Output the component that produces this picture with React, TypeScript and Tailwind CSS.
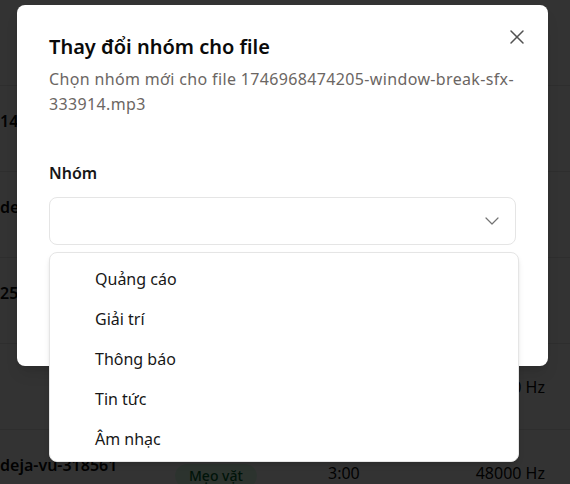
import React from "react";

const rows = [
  { name: "", group: "", duration: "", rate: "" },
  { name: "14", group: "", duration: "", rate: "" },
  { name: "deja-vu-318561", group: "", duration: "", rate: "" },
  { name: "2558-click-sfx", group: "", duration: "", rate: "" },
  { name: "", group: "", duration: "", rate: "48000 Hz" },
  { name: "deja-vu-318561", group: "Mẹo vặt", duration: "3:00", rate: "48000 Hz" },
];

const groups = ["Quảng cáo", "Giải trí", "Thông báo", "Tin tức", "Âm nhạc"];

const App = () => {
  return (
    <div className="relative w-[570px] h-[484px] overflow-hidden bg-white text-neutral-950 font-['Noto_Sans',sans-serif]">
      {/* table behind the dialog */}
      <div className="flex flex-col">
        {rows.map((r, i) => (
          <div key={i} className="flex h-[86px] shrink-0 border-b border-neutral-200 items-center">
            <div className="w-[175px] pb-4 font-semibold text-base whitespace-nowrap">{r.name}</div>
            <div className="w-[153px] pt-[5px]">
              {r.group && (
                <span className="inline-flex h-6 items-center rounded-full bg-green-100 px-[14px] text-sm font-medium text-green-800">
                  {r.group}
                </span>
              )}
            </div>
            <div className="w-[100px] text-base">{r.duration}</div>
            <div className="flex-1 pr-[25px] text-right text-base">{r.rate}</div>
          </div>
        ))}
      </div>

      {/* overlay */}
      <div className="absolute inset-0 bg-black/80" />

      {/* dialog */}
      <div className="absolute left-[17px] top-[5px] w-[531px] h-[361px] rounded-lg bg-white shadow-lg px-8 pt-7">
        <button className="absolute right-[19px] top-5 text-neutral-600">
          <svg width="24" height="24" viewBox="0 0 24 24" fill="none" stroke="currentColor" strokeWidth="1.5" strokeLinecap="round">
            <path d="M18 6 6 18" />
            <path d="m6 6 12 12" />
          </svg>
        </button>
        <h2 className="text-xl leading-7 font-semibold text-neutral-950">Thay đổi nhóm cho file</h2>
        <p className="mt-1.5 text-base leading-[25px] tracking-[0.35px] text-[#6b6663]">
          Chọn nhóm mới cho file 1746968474205-window-break-sfx-333914.mp3
        </p>
        <div className="mt-11 text-base leading-6 font-semibold text-neutral-900">Nhóm</div>
        <div className="mt-3 flex h-12 items-center justify-end rounded-lg border border-neutral-200 pr-[11px]">
          <svg width="24" height="24" viewBox="0 0 24 24" fill="none" stroke="currentColor" strokeWidth="1.2" strokeLinecap="round" strokeLinejoin="round" className="text-neutral-500">
            <path d="m6 9 6 6 6-6" />
          </svg>
        </div>
      </div>

      {/* select dropdown */}
      <div className="absolute left-[49px] top-[252px] w-[470px] h-[210px] rounded-lg border border-neutral-200 bg-white p-1 shadow-md">
        {groups.map((g) => (
          <div key={g} className="flex h-10 items-center pl-[41px] pt-1 text-base text-neutral-900">
            {g}
          </div>
        ))}
      </div>
    </div>
  );
};

export default App;
